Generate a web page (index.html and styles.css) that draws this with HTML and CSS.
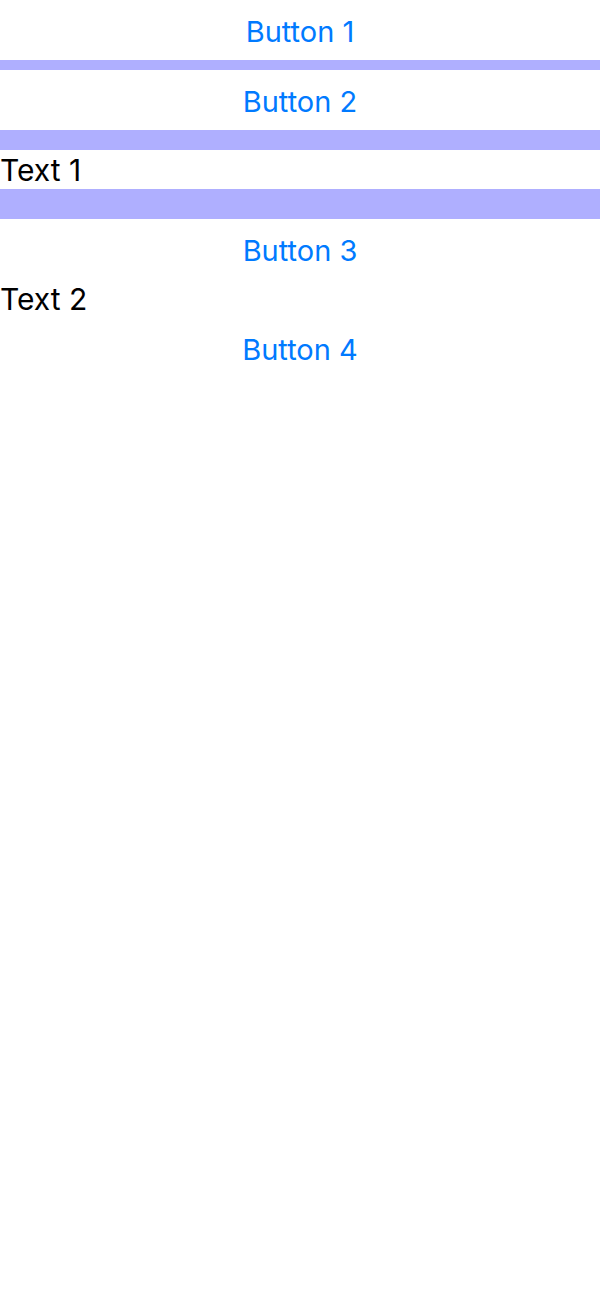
FILE: index.html
```html
<!DOCTYPE html>
<html>
<head>
<meta charset="utf-8">
<link rel="stylesheet" href="styles.css">
</head>
<body>
<div class="stack">
  <div class="btn">Button 1</div>
  <div class="bar bar-10"></div>
  <div class="btn">Button 2</div>
  <div class="bar bar-20"></div>
  <div class="txt">Text 1</div>
  <div class="bar bar-30"></div>
  <div class="btn">Button 3</div>
  <div class="txt">Text 2</div>
  <div class="btn">Button 4</div>
</div>
</body>
</html>
```
FILE: styles.css
```css
html, body {
  margin: 0;
  padding: 0;
  background: #ffffff;
}
body {
  width: 600px;
  height: 1298px;
  font-family: Inter, "Noto Sans", sans-serif;
}
.stack {
  display: flex;
  flex-direction: column;
}
.btn {
  height: 60px;
  box-sizing: border-box;
  padding-top: 2px;
  display: flex;
  align-items: center;
  justify-content: center;
  color: #007aff;
  font-size: 29px;
}
.txt {
  height: 39px;
  box-sizing: border-box;
  padding-top: 1px;
  display: flex;
  align-items: center;
  color: #000000;
  font-size: 30px;
}
.bar {
  background: #afafff;
}
.bar-10 { height: 10px; }
.bar-20 { height: 20px; }
.bar-30 { height: 30px; }
```
